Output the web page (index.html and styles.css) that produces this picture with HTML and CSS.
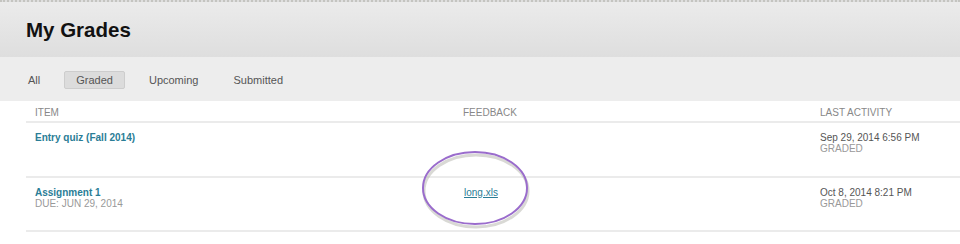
FILE: index.html
```html
<!DOCTYPE html>
<html lang="en">
<head>
  <meta charset="UTF-8" />
  <title>My Grades</title>
  <link rel="stylesheet" href="styles.css">
</head>
<body>
  <div class="page">
    <div class="header">
      <h1>My Grades</h1>
    </div>

    <div class="tabs">
      <span class="tab">All</span>
      <span class="tab active">Graded</span>
      <span class="tab">Upcoming</span>
      <span class="tab">Submitted</span>
    </div>

    <div class="grades">
      <div class="row head">
        <div class="cell">Item</div>
        <div class="cell">Feedback</div>
        <div class="cell">Last Activity</div>
      </div>

      <div class="row">
        <div class="cell">
          <a class="item-title">Entry quiz (Fall 2014)</a>
        </div>
        <div class="cell"></div>
        <div class="cell">
          <div class="date">Sep 29, 2014 6:56 PM</div>
          <div class="status">Graded</div>
        </div>
      </div>

      <div class="row">
        <div class="cell">
          <a class="item-title">Assignment 1</a>
          <div class="due">Due: Jun 29, 2014</div>
        </div>
        <div class="cell feedback">
          <a class="file-link">long.xls</a>
          <!-- hand drawn highlight around the file -->
          <svg class="circle" width="120" height="86" viewBox="0 0 120 86">
            <ellipse cx="60" cy="42" rx="52" ry="36" fill="none" stroke="#b4b4ac" stroke-width="3" opacity="0.5" transform="translate(1,3)"/>
            <ellipse cx="60" cy="42" rx="52" ry="36" fill="none" stroke="#9a6ccc" stroke-width="2"/>
          </svg>
        </div>
        <div class="cell">
          <div class="date">Oct 8, 2014 8:21 PM</div>
          <div class="status">Graded</div>
        </div>
      </div>
    </div>
  </div>
</body>
</html>
```

FILE: styles.css
```css
body {
  margin: 0;
  font-family: 'Liberation Sans', Arial, sans-serif;
  background: #fff;
  color: #555;
}

.page {
  width: 960px;
  height: 244px;
  overflow: hidden;
}

.header {   /* title band */
  height: 55px;
  border-top: 2px dotted #c4c4c0;
  background: linear-gradient(#ebebeb, #dedede);
  padding-left: 26px;
  display: flex;
  align-items: center;
}

h1 {
  margin: 0;
  font-size: 20.5px;
  font-weight: bold;
  color: #111;
}

.tabs {
  height: 44px;
  background: #ededed;
  display: flex;
  align-items: center;
  padding-left: 28px;
  padding-top: 2px;
  box-sizing: border-box;
  gap: 24px;
}

.tab {
  font-size: 11px;
  color: #555;
}

.tab.active {
  background: #dcdcdc;
  border: 1px solid #cdcdcd;
  border-radius: 2px;
  padding: 2px 11px 2px 11px;
}

.tab:nth-child(3) {   /* wider gap before Submitted */
  margin-right: 11px;
}

/* GRADES TABLE */
.grades {
  margin-left: 26px;
}

.row {
  display: grid;
  grid-template-columns: 428px 357px 1fr;
  border-bottom: 2px solid #ebebeb;
  height: 53px;
  padding-left: 9px;
}

.row:last-child {
  height: 52px;
}

.row.head {
  height: 18px;
  padding-top: 2px;
  align-items: center;
}

.row.head .cell {
  font-size: 10px;
  color: #888;
  text-transform: uppercase;
  padding-top: 0;
}

.cell {
  padding-top: 9px;
  font-size: 10px;
  line-height: 11px;
}

.item-title {
  font-weight: bold;
  color: #2a7d96;
}

.due,
.status {
  color: #999;
  text-transform: uppercase;
}

.date {
  color: #555;
}

.feedback {
  position: relative;
}

.file-link {
  color: #2a7d96;
  text-decoration: underline;
  margin-left: 1px;
}

.circle {
  position: absolute;
  left: -48px;
  top: -32px;
}
```
